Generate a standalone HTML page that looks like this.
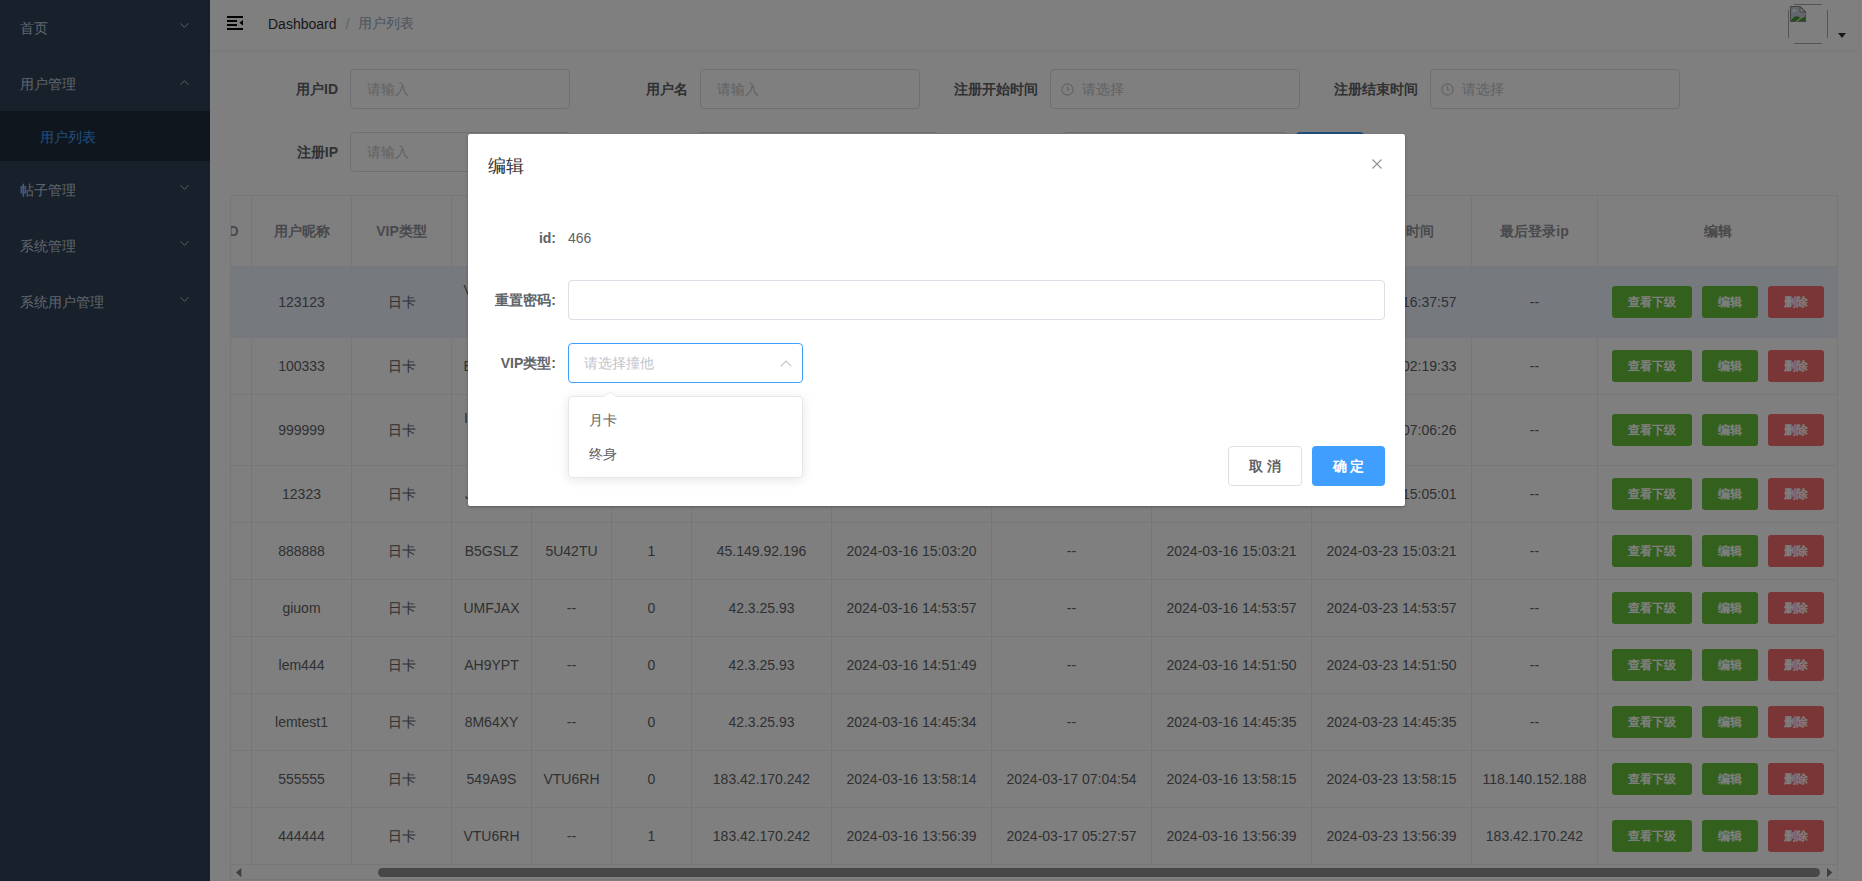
<!DOCTYPE html><html><head><meta charset="utf-8"><title>用户列表</title><style>
*{box-sizing:border-box;margin:0;padding:0}
html,body{width:1862px;height:881px;overflow:hidden;background:#fff;font-family:"Liberation Sans",sans-serif;font-size:14px;color:#606266}
.abs{position:absolute}
#side{position:absolute;left:0;top:0;width:210px;height:881px;background:#304156}
.mi{position:absolute;left:0;width:210px;color:#bfcbd9;font-size:14px;padding-left:20px;display:flex;align-items:center;padding-top:3px}
.mi.sub{background:#1f2d3d;padding-left:40px;color:#409eff}
.chev{position:absolute;left:179.5px;width:9px;height:9px}
#nav{position:absolute;left:210px;top:0;width:1648px;height:50px;background:#fff;box-shadow:0 1px 4px rgba(0,21,41,.08)}
.lbl{position:absolute;font-weight:700;color:#606266;font-size:14px;text-align:right;line-height:40px;height:40px}
.inp{position:absolute;height:40px;border:1px solid #dcdfe6;border-radius:4px;background:#fff;color:#c0c4cc;font-size:14px;line-height:38px;padding-left:16px}
.tb{position:absolute;left:230px;top:195px;width:1608px;height:685px;overflow:hidden}
.cell{position:absolute;display:flex;align-items:center;justify-content:center;text-align:center;line-height:23px;padding-left:1px}
.hl{position:absolute;height:1px;background:#ebeef5}
.vl{position:absolute;width:1px;background:#ebeef5}
.btn{position:absolute;height:32px;border-radius:3px;color:#fff;font-size:12px;display:flex;align-items:center;justify-content:center;font-weight:700;padding-top:1px}
.g{background:#67c23a}
.r{background:#f56c6c}
#ov{position:absolute;left:0;top:0;width:1862px;height:881px;background:rgba(0,0,0,.5)}
#dlg{position:absolute;left:468px;top:134px;width:937px;height:372px;background:#fff;border-radius:2px;box-shadow:0 1px 3px rgba(0,0,0,.3)}
</style></head><body><div id="side"><div class="mi" style="top:0px;height:55px">首页</div><svg class="chev" style="top:21px" viewBox="0 0 10 6" width="10" height="6"><path d="M0.5 0.5 L5 5 L9.5 0.5" fill="none" stroke="#bfcbd9" stroke-width="1"/></svg><div class="mi" style="top:55px;height:56px">用户管理</div><svg class="chev" style="top:78px" viewBox="0 0 10 6" width="10" height="6"><path d="M0.5 5.5 L5 1 L9.5 5.5" fill="none" stroke="#bfcbd9" stroke-width="1"/></svg><div class="mi sub" style="top:111px;height:50px">用户列表</div><div class="mi" style="top:161px;height:56px">帖子管理</div><svg class="chev" style="top:183px" viewBox="0 0 10 6" width="10" height="6"><path d="M0.5 0.5 L5 5 L9.5 0.5" fill="none" stroke="#bfcbd9" stroke-width="1"/></svg><div class="mi" style="top:217px;height:56px">系统管理</div><svg class="chev" style="top:239px" viewBox="0 0 10 6" width="10" height="6"><path d="M0.5 0.5 L5 5 L9.5 0.5" fill="none" stroke="#bfcbd9" stroke-width="1"/></svg><div class="mi" style="top:273px;height:56px">系统用户管理</div><svg class="chev" style="top:295px" viewBox="0 0 10 6" width="10" height="6"><path d="M0.5 0.5 L5 5 L9.5 0.5" fill="none" stroke="#bfcbd9" stroke-width="1"/></svg></div><div id="nav"><svg class="abs" style="left:17px;top:16px" width="16" height="14" viewBox="0 0 16 14"><rect x="0" y="0" width="16" height="2" fill="#000"/><rect x="0" y="4" width="10" height="2" fill="#000"/><rect x="0" y="8" width="10" height="2" fill="#000"/><rect x="0" y="12" width="16" height="2" fill="#000"/><path d="M12.3 6.75 L16 4 L16 9.5 Z" fill="#000"/></svg><div class="abs" style="left:58px;top:-1px;height:50px;line-height:50px;font-size:14px;color:#303133;white-space:nowrap">Dashboard<span style="color:#c0c4cc;margin:0 9px">/</span><span style="color:#97a8be;position:relative;top:-1px">用户列表</span></div><div class="abs" style="left:1584px;top:4px;width:28px;height:1px;background:#a8a8a8"></div><div class="abs" style="left:1584px;top:43px;width:28px;height:1px;background:#a8a8a8"></div><div class="abs" style="left:1578px;top:10px;width:1px;height:28px;background:#a8a8a8"></div><div class="abs" style="left:1617px;top:10px;width:1px;height:28px;background:#a8a8a8"></div><svg class="abs" style="left:1580px;top:6px" width="17" height="17" viewBox="0 0 17 17"><path d="M0.5 0.5 H10 L15.5 6 V15.5 H0.5 Z" fill="#c4cede" stroke="#8a8a8a" stroke-width="1.1"/><path d="M10 0.8 V6 H15.2 Z" fill="#f2f2f2" stroke="#8a8a8a" stroke-width="1"/><ellipse cx="4.3" cy="4.8" rx="2.2" ry="1.2" fill="#f4f4f4"/><path d="M1 15 Q4 8.5 9.5 11 L12 15 Z" fill="#3f9b2a"/><path d="M11 12.5 L15 11 V15 H12 Z" fill="#3f9b2a"/><path d="M6 16 L16 7.5" stroke="#d0d0d0" stroke-width="1.6"/></svg><svg class="abs" style="left:1628px;top:33px" width="8" height="5" viewBox="0 0 8 5"><path d="M0 0 H8 L4 5 Z" fill="#303133"/></svg></div><div class="lbl" style="left:138px;top:69px;width:200px">用户ID</div><div class="inp" style="left:350px;top:69px;width:220px">请输入</div><div class="lbl" style="left:488px;top:69px;width:200px">用户名</div><div class="inp" style="left:700px;top:69px;width:220px">请输入</div><div class="lbl" style="left:838px;top:69px;width:200px">注册开始时间</div><div class="inp" style="left:1050px;top:69px;width:250px;padding-left:31px">请选择<svg class="abs" style="left:10px;top:13px" width="13" height="13" viewBox="0 0 13 13"><circle cx="6.5" cy="6.5" r="5.6" fill="none" stroke="#c0c4cc" stroke-width="1.1"/><path d="M6.5 3.2 V6.8 H9" fill="none" stroke="#c0c4cc" stroke-width="1.1"/></svg></div><div class="lbl" style="left:1218px;top:69px;width:200px">注册结束时间</div><div class="inp" style="left:1430px;top:69px;width:250px;padding-left:31px">请选择<svg class="abs" style="left:10px;top:13px" width="13" height="13" viewBox="0 0 13 13"><circle cx="6.5" cy="6.5" r="5.6" fill="none" stroke="#c0c4cc" stroke-width="1.1"/><path d="M6.5 3.2 V6.8 H9" fill="none" stroke="#c0c4cc" stroke-width="1.1"/></svg></div><div class="lbl" style="left:138px;top:132px;width:200px">注册IP</div><div class="inp" style="left:350px;top:132px;width:220px">请输入</div><div class="inp" style="left:698px;top:132px;width:240px">请输入</div><div class="inp" style="left:1063px;top:132px;width:224px">请选择</div><div class="abs" style="left:1296px;top:132px;width:68px;height:40px;background:#409eff;border-radius:4px"></div><div class="tb"><div class="abs" style="left:0;top:71px;width:1607px;height:71px;background:#ecf5ff"></div><div class="hl" style="left:0;top:0;width:1608px"></div><div class="hl" style="left:0;top:71px;width:1608px"></div><div class="hl" style="left:0;top:142px;width:1608px"></div><div class="hl" style="left:0;top:199px;width:1608px"></div><div class="hl" style="left:0;top:270px;width:1608px"></div><div class="hl" style="left:0;top:327px;width:1608px"></div><div class="hl" style="left:0;top:384px;width:1608px"></div><div class="hl" style="left:0;top:441px;width:1608px"></div><div class="hl" style="left:0;top:498px;width:1608px"></div><div class="hl" style="left:0;top:555px;width:1608px"></div><div class="hl" style="left:0;top:612px;width:1608px"></div><div class="hl" style="left:0;top:669px;width:1608px"></div><div class="hl" style="left:0;top:684px;width:1608px"></div><div class="vl" style="left:21px;top:0;height:669px"></div><div class="vl" style="left:121px;top:0;height:669px"></div><div class="vl" style="left:221px;top:0;height:669px"></div><div class="vl" style="left:301px;top:0;height:669px"></div><div class="vl" style="left:381px;top:0;height:669px"></div><div class="vl" style="left:461px;top:0;height:669px"></div><div class="vl" style="left:601px;top:0;height:669px"></div><div class="vl" style="left:761px;top:0;height:669px"></div><div class="vl" style="left:921px;top:0;height:669px"></div><div class="vl" style="left:1081px;top:0;height:669px"></div><div class="vl" style="left:1241px;top:0;height:669px"></div><div class="vl" style="left:1367px;top:0;height:669px"></div><div class="vl" style="left:1607px;top:0;height:669px"></div><div class="vl" style="left:1607px;top:0;height:685px"></div><div class="cell" style="left:-47px;top:1px;width:68px;height:70px;font-weight:700;color:#909399">用户ID</div><div class="cell" style="left:21px;top:1px;width:100px;height:70px;font-weight:700;color:#909399">用户昵称</div><div class="cell" style="left:121px;top:1px;width:100px;height:70px;font-weight:700;color:#909399">VIP类型</div><div class="cell" style="left:221px;top:1px;width:80px;height:70px;font-weight:700;color:#909399">邀请码</div><div class="cell" style="left:301px;top:1px;width:80px;height:70px;font-weight:700;color:#909399">上级<br>邀请码</div><div class="cell" style="left:381px;top:1px;width:80px;height:70px;font-weight:700;color:#909399">等级</div><div class="cell" style="left:461px;top:1px;width:140px;height:70px;font-weight:700;color:#909399">注册ip</div><div class="cell" style="left:601px;top:1px;width:160px;height:70px;font-weight:700;color:#909399">注册时间</div><div class="cell" style="left:761px;top:1px;width:160px;height:70px;font-weight:700;color:#909399">最后登录时间</div><div class="cell" style="left:921px;top:1px;width:160px;height:70px;font-weight:700;color:#909399">VIP开始时间</div><div class="cell" style="left:1081px;top:1px;width:160px;height:70px;font-weight:700;color:#909399">会员到期时间</div><div class="cell" style="left:1241px;top:1px;width:126px;height:70px;font-weight:700;color:#909399">最后登录ip</div><div class="cell" style="left:1367px;top:1px;width:240px;height:70px;font-weight:700;color:#909399">编辑</div><div class="cell" style="left:-47px;top:72px;width:68px;height:70px">470</div><div class="cell" style="left:21px;top:72px;width:100px;height:70px">123123</div><div class="cell" style="left:121px;top:72px;width:100px;height:70px">日卡</div><div class="cell" style="left:221px;top:72px;width:80px;height:70px">VTU6RH<br>ab</div><div class="cell" style="left:301px;top:72px;width:80px;height:70px">--</div><div class="cell" style="left:381px;top:72px;width:80px;height:70px">0</div><div class="cell" style="left:461px;top:72px;width:140px;height:70px">183.42.170.242</div><div class="cell" style="left:601px;top:72px;width:160px;height:70px">2024-03-16 16:37:56</div><div class="cell" style="left:761px;top:72px;width:160px;height:70px">--</div><div class="cell" style="left:921px;top:72px;width:160px;height:70px">2024-03-16 16:37:57</div><div class="cell" style="left:1081px;top:72px;width:160px;height:70px">2024-03-23 16:37:57</div><div class="cell" style="left:1241px;top:72px;width:126px;height:70px">--</div><div class="btn g" style="left:1382px;top:91px;width:80px">查看下级</div><div class="btn g" style="left:1472px;top:91px;width:56px">编辑</div><div class="btn r" style="left:1538px;top:91px;width:56px">删除</div><div class="cell" style="left:-47px;top:143px;width:68px;height:56px">469</div><div class="cell" style="left:21px;top:143px;width:100px;height:56px">100333</div><div class="cell" style="left:121px;top:143px;width:100px;height:56px">日卡</div><div class="cell" style="left:221px;top:143px;width:80px;height:56px">EQ3KXA</div><div class="cell" style="left:301px;top:143px;width:80px;height:56px">--</div><div class="cell" style="left:381px;top:143px;width:80px;height:56px">0</div><div class="cell" style="left:461px;top:143px;width:140px;height:56px">183.42.170.242</div><div class="cell" style="left:601px;top:143px;width:160px;height:56px">2024-03-16 02:19:32</div><div class="cell" style="left:761px;top:143px;width:160px;height:56px">--</div><div class="cell" style="left:921px;top:143px;width:160px;height:56px">2024-03-16 02:19:33</div><div class="cell" style="left:1081px;top:143px;width:160px;height:56px">2024-03-23 02:19:33</div><div class="cell" style="left:1241px;top:143px;width:126px;height:56px">--</div><div class="btn g" style="left:1382px;top:155px;width:80px">查看下级</div><div class="btn g" style="left:1472px;top:155px;width:56px">编辑</div><div class="btn r" style="left:1538px;top:155px;width:56px">删除</div><div class="cell" style="left:-47px;top:200px;width:68px;height:70px">468</div><div class="cell" style="left:21px;top:200px;width:100px;height:70px">999999</div><div class="cell" style="left:121px;top:200px;width:100px;height:70px">日卡</div><div class="cell" style="left:221px;top:200px;width:80px;height:70px">IKD8QW<br>ab</div><div class="cell" style="left:301px;top:200px;width:80px;height:70px">--</div><div class="cell" style="left:381px;top:200px;width:80px;height:70px">0</div><div class="cell" style="left:461px;top:200px;width:140px;height:70px">183.42.170.242</div><div class="cell" style="left:601px;top:200px;width:160px;height:70px">2024-03-16 07:06:25</div><div class="cell" style="left:761px;top:200px;width:160px;height:70px">--</div><div class="cell" style="left:921px;top:200px;width:160px;height:70px">2024-03-16 07:06:26</div><div class="cell" style="left:1081px;top:200px;width:160px;height:70px">2024-03-23 07:06:26</div><div class="cell" style="left:1241px;top:200px;width:126px;height:70px">--</div><div class="btn g" style="left:1382px;top:219px;width:80px">查看下级</div><div class="btn g" style="left:1472px;top:219px;width:56px">编辑</div><div class="btn r" style="left:1538px;top:219px;width:56px">删除</div><div class="cell" style="left:-47px;top:271px;width:68px;height:56px">467</div><div class="cell" style="left:21px;top:271px;width:100px;height:56px">12323</div><div class="cell" style="left:121px;top:271px;width:100px;height:56px">日卡</div><div class="cell" style="left:221px;top:271px;width:80px;height:56px">JX9PLM</div><div class="cell" style="left:301px;top:271px;width:80px;height:56px">--</div><div class="cell" style="left:381px;top:271px;width:80px;height:56px">0</div><div class="cell" style="left:461px;top:271px;width:140px;height:56px">183.42.170.242</div><div class="cell" style="left:601px;top:271px;width:160px;height:56px">2024-03-16 15:05:00</div><div class="cell" style="left:761px;top:271px;width:160px;height:56px">--</div><div class="cell" style="left:921px;top:271px;width:160px;height:56px">2024-03-16 15:05:01</div><div class="cell" style="left:1081px;top:271px;width:160px;height:56px">2024-03-23 15:05:01</div><div class="cell" style="left:1241px;top:271px;width:126px;height:56px">--</div><div class="btn g" style="left:1382px;top:283px;width:80px">查看下级</div><div class="btn g" style="left:1472px;top:283px;width:56px">编辑</div><div class="btn r" style="left:1538px;top:283px;width:56px">删除</div><div class="cell" style="left:-47px;top:328px;width:68px;height:56px">466</div><div class="cell" style="left:21px;top:328px;width:100px;height:56px">888888</div><div class="cell" style="left:121px;top:328px;width:100px;height:56px">日卡</div><div class="cell" style="left:221px;top:328px;width:80px;height:56px">B5GSLZ</div><div class="cell" style="left:301px;top:328px;width:80px;height:56px">5U42TU</div><div class="cell" style="left:381px;top:328px;width:80px;height:56px">1</div><div class="cell" style="left:461px;top:328px;width:140px;height:56px">45.149.92.196</div><div class="cell" style="left:601px;top:328px;width:160px;height:56px">2024-03-16 15:03:20</div><div class="cell" style="left:761px;top:328px;width:160px;height:56px">--</div><div class="cell" style="left:921px;top:328px;width:160px;height:56px">2024-03-16 15:03:21</div><div class="cell" style="left:1081px;top:328px;width:160px;height:56px">2024-03-23 15:03:21</div><div class="cell" style="left:1241px;top:328px;width:126px;height:56px">--</div><div class="btn g" style="left:1382px;top:340px;width:80px">查看下级</div><div class="btn g" style="left:1472px;top:340px;width:56px">编辑</div><div class="btn r" style="left:1538px;top:340px;width:56px">删除</div><div class="cell" style="left:-47px;top:385px;width:68px;height:56px">465</div><div class="cell" style="left:21px;top:385px;width:100px;height:56px">giuom</div><div class="cell" style="left:121px;top:385px;width:100px;height:56px">日卡</div><div class="cell" style="left:221px;top:385px;width:80px;height:56px">UMFJAX</div><div class="cell" style="left:301px;top:385px;width:80px;height:56px">--</div><div class="cell" style="left:381px;top:385px;width:80px;height:56px">0</div><div class="cell" style="left:461px;top:385px;width:140px;height:56px">42.3.25.93</div><div class="cell" style="left:601px;top:385px;width:160px;height:56px">2024-03-16 14:53:57</div><div class="cell" style="left:761px;top:385px;width:160px;height:56px">--</div><div class="cell" style="left:921px;top:385px;width:160px;height:56px">2024-03-16 14:53:57</div><div class="cell" style="left:1081px;top:385px;width:160px;height:56px">2024-03-23 14:53:57</div><div class="cell" style="left:1241px;top:385px;width:126px;height:56px">--</div><div class="btn g" style="left:1382px;top:397px;width:80px">查看下级</div><div class="btn g" style="left:1472px;top:397px;width:56px">编辑</div><div class="btn r" style="left:1538px;top:397px;width:56px">删除</div><div class="cell" style="left:-47px;top:442px;width:68px;height:56px">464</div><div class="cell" style="left:21px;top:442px;width:100px;height:56px">lem444</div><div class="cell" style="left:121px;top:442px;width:100px;height:56px">日卡</div><div class="cell" style="left:221px;top:442px;width:80px;height:56px">AH9YPT</div><div class="cell" style="left:301px;top:442px;width:80px;height:56px">--</div><div class="cell" style="left:381px;top:442px;width:80px;height:56px">0</div><div class="cell" style="left:461px;top:442px;width:140px;height:56px">42.3.25.93</div><div class="cell" style="left:601px;top:442px;width:160px;height:56px">2024-03-16 14:51:49</div><div class="cell" style="left:761px;top:442px;width:160px;height:56px">--</div><div class="cell" style="left:921px;top:442px;width:160px;height:56px">2024-03-16 14:51:50</div><div class="cell" style="left:1081px;top:442px;width:160px;height:56px">2024-03-23 14:51:50</div><div class="cell" style="left:1241px;top:442px;width:126px;height:56px">--</div><div class="btn g" style="left:1382px;top:454px;width:80px">查看下级</div><div class="btn g" style="left:1472px;top:454px;width:56px">编辑</div><div class="btn r" style="left:1538px;top:454px;width:56px">删除</div><div class="cell" style="left:-47px;top:499px;width:68px;height:56px">463</div><div class="cell" style="left:21px;top:499px;width:100px;height:56px">lemtest1</div><div class="cell" style="left:121px;top:499px;width:100px;height:56px">日卡</div><div class="cell" style="left:221px;top:499px;width:80px;height:56px">8M64XY</div><div class="cell" style="left:301px;top:499px;width:80px;height:56px">--</div><div class="cell" style="left:381px;top:499px;width:80px;height:56px">0</div><div class="cell" style="left:461px;top:499px;width:140px;height:56px">42.3.25.93</div><div class="cell" style="left:601px;top:499px;width:160px;height:56px">2024-03-16 14:45:34</div><div class="cell" style="left:761px;top:499px;width:160px;height:56px">--</div><div class="cell" style="left:921px;top:499px;width:160px;height:56px">2024-03-16 14:45:35</div><div class="cell" style="left:1081px;top:499px;width:160px;height:56px">2024-03-23 14:45:35</div><div class="cell" style="left:1241px;top:499px;width:126px;height:56px">--</div><div class="btn g" style="left:1382px;top:511px;width:80px">查看下级</div><div class="btn g" style="left:1472px;top:511px;width:56px">编辑</div><div class="btn r" style="left:1538px;top:511px;width:56px">删除</div><div class="cell" style="left:-47px;top:556px;width:68px;height:56px">462</div><div class="cell" style="left:21px;top:556px;width:100px;height:56px">555555</div><div class="cell" style="left:121px;top:556px;width:100px;height:56px">日卡</div><div class="cell" style="left:221px;top:556px;width:80px;height:56px">549A9S</div><div class="cell" style="left:301px;top:556px;width:80px;height:56px">VTU6RH</div><div class="cell" style="left:381px;top:556px;width:80px;height:56px">0</div><div class="cell" style="left:461px;top:556px;width:140px;height:56px">183.42.170.242</div><div class="cell" style="left:601px;top:556px;width:160px;height:56px">2024-03-16 13:58:14</div><div class="cell" style="left:761px;top:556px;width:160px;height:56px">2024-03-17 07:04:54</div><div class="cell" style="left:921px;top:556px;width:160px;height:56px">2024-03-16 13:58:15</div><div class="cell" style="left:1081px;top:556px;width:160px;height:56px">2024-03-23 13:58:15</div><div class="cell" style="left:1241px;top:556px;width:126px;height:56px">118.140.152.188</div><div class="btn g" style="left:1382px;top:568px;width:80px">查看下级</div><div class="btn g" style="left:1472px;top:568px;width:56px">编辑</div><div class="btn r" style="left:1538px;top:568px;width:56px">删除</div><div class="cell" style="left:-47px;top:613px;width:68px;height:56px">461</div><div class="cell" style="left:21px;top:613px;width:100px;height:56px">444444</div><div class="cell" style="left:121px;top:613px;width:100px;height:56px">日卡</div><div class="cell" style="left:221px;top:613px;width:80px;height:56px">VTU6RH</div><div class="cell" style="left:301px;top:613px;width:80px;height:56px">--</div><div class="cell" style="left:381px;top:613px;width:80px;height:56px">1</div><div class="cell" style="left:461px;top:613px;width:140px;height:56px">183.42.170.242</div><div class="cell" style="left:601px;top:613px;width:160px;height:56px">2024-03-16 13:56:39</div><div class="cell" style="left:761px;top:613px;width:160px;height:56px">2024-03-17 05:27:57</div><div class="cell" style="left:921px;top:613px;width:160px;height:56px">2024-03-16 13:56:39</div><div class="cell" style="left:1081px;top:613px;width:160px;height:56px">2024-03-23 13:56:39</div><div class="cell" style="left:1241px;top:613px;width:126px;height:56px">183.42.170.242</div><div class="btn g" style="left:1382px;top:625px;width:80px">查看下级</div><div class="btn g" style="left:1472px;top:625px;width:56px">编辑</div><div class="btn r" style="left:1538px;top:625px;width:56px">删除</div><svg class="abs" style="left:6px;top:673px" width="6" height="10" viewBox="0 0 6 10"><path d="M0 4.6 L5.3 -0.1 V9.3 Z" fill="#7e7e7e"/></svg><div class="abs" style="left:148px;top:673px;width:1442px;height:9px;border-radius:4.5px;background:#8f8f8f"></div><svg class="abs" style="left:1597px;top:673px" width="6" height="10" viewBox="0 0 6 10"><path d="M5.3 4.6 L0 -0.1 V9.3 Z" fill="#7e7e7e"/></svg><div class="vl" style="left:0;top:0;height:685px"></div></div><div id="ov"></div><div id="dlg"><div class="abs" style="left:20px;top:20px;line-height:24px;font-size:18px;color:#303133">编辑</div><svg class="abs" style="left:904px;top:25px" width="10" height="10" viewBox="0 0 10 10"><path d="M0.5 0.5 L9.5 9.5 M9.5 0.5 L0.5 9.5" stroke="#909399" stroke-width="1.1"/></svg><div class="abs" style="left:0;top:84px;width:88px;text-align:right;font-weight:700;color:#606266;line-height:40px">id:</div><div class="abs" style="left:100px;top:84px;line-height:40px;color:#606266">466</div><div class="abs" style="left:0;top:146px;width:88px;text-align:right;font-weight:700;color:#606266;line-height:40px">重置密码:</div><div class="abs" style="left:100px;top:146px;width:817px;height:40px;border:1px solid #dcdfe6;border-radius:4px"></div><div class="abs" style="left:0;top:209px;width:88px;text-align:right;font-weight:700;color:#606266;line-height:40px">VIP类型:</div><div class="abs" style="left:100px;top:209px;width:235px;height:40px;border:1px solid #409eff;border-radius:4px;padding-left:15px;line-height:38px;color:#c0c4cc">请选择撞他<svg class="abs" style="left:211px;top:16px" width="12" height="7" viewBox="0 0 12 7"><path d="M0.7 6.3 L6 1 L11.3 6.3" fill="none" stroke="#c0c4cc" stroke-width="1.2"/></svg></div><div class="abs" style="left:760px;top:312px;width:74px;height:40px;border:1px solid #dcdfe6;border-radius:4px;display:flex;align-items:center;justify-content:center;color:#606266;font-weight:700;padding-top:2px">取 消</div><div class="abs" style="left:844px;top:312px;width:73px;height:40px;border-radius:4px;background:#409eff;display:flex;align-items:center;justify-content:center;color:#fff;font-weight:700;padding-top:2px">确 定</div></div><div class="abs" style="left:568px;top:396px;width:235px;height:82px;background:#fff;border:1px solid #e4e7ed;border-radius:4px;box-shadow:0 2px 12px 0 rgba(0,0,0,.1);padding:6px 0"><div style="height:34px;line-height:34px;padding:0 20px;color:#606266">月卡</div><div style="height:34px;line-height:34px;padding:0 20px;color:#606266">终身</div></div><svg class="abs" style="left:603px;top:391px" width="14" height="7" viewBox="0 0 14 7"><path d="M1.5 5.6 L7 0.7 L12.5 5.6" fill="#fff" stroke="#e4e7ed" stroke-width="1"/><rect x="1.5" y="5" width="11" height="1.1" fill="#fff"/></svg></body></html>
